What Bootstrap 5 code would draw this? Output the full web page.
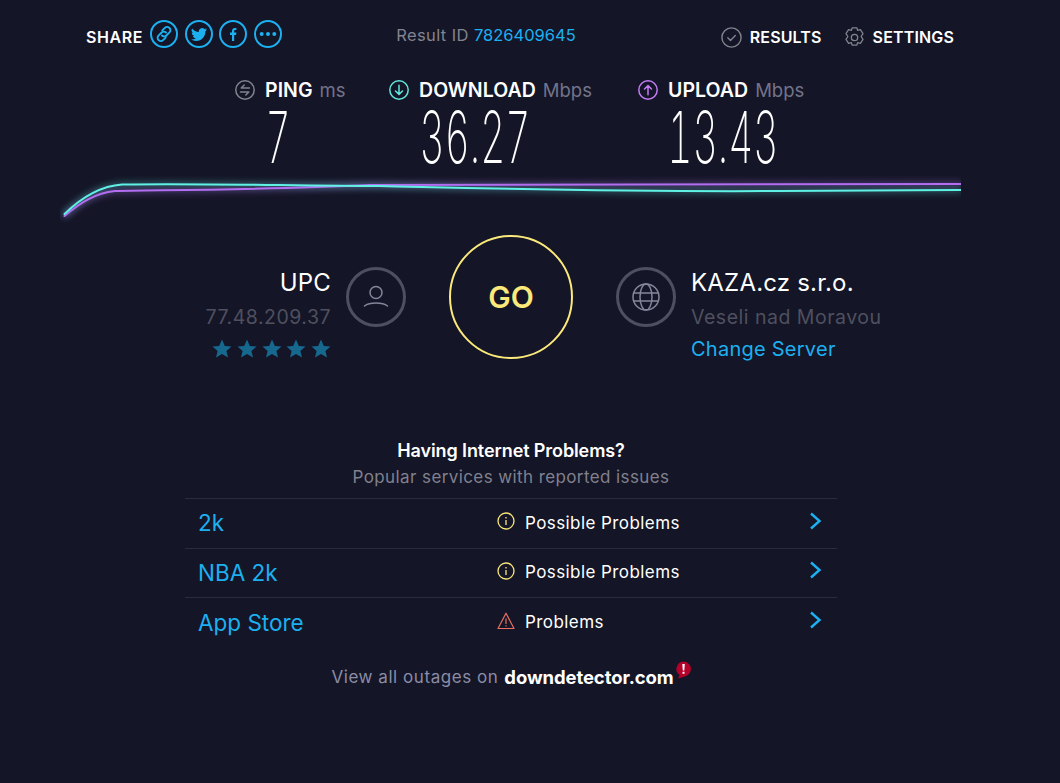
<!DOCTYPE html>
<html lang="en">
<head>
  <meta charset="UTF-8">
  <title>Speedtest</title>
  <link href="https://cdn.jsdelivr.net/npm/bootstrap@5.3.0/dist/css/bootstrap.min.css" rel="stylesheet">
  <style>
    body { background: #141526; color: #fff; font-family: Inter, "Liberation Sans", sans-serif; height: 783px; overflow: hidden; }
    svg { display: block; flex: none; }
    .top-bar { padding: 20px 106px 0 86px; height: 80px; }
    .top-label { font-size: 16px; font-weight: 600; letter-spacing: .15px; }
    .top-right { margin-top: 5px; }
    .share-label { margin-top: 5px; letter-spacing: .6px; }
    .share-icons { gap: 6.7px; margin-left: 7px; }
    .result-id { margin-left: 114px; font-size: 16.5px; color: #82838f; line-height: 30px; letter-spacing: .4px; }
    .cyan-link { color: #1cb0f0; text-decoration: none; }
    .result-id .cyan-link { letter-spacing: 0; }
    .metrics { padding-left: 235px; height: 90px; }
    .metric-head { font-size: 19.5px; font-weight: 600; letter-spacing: .05px; line-height: 20px; height: 20px; white-space: nowrap; gap: 10px; }
    .metric-head span { color: #72738a; font-weight: 400; letter-spacing: 0; font-size: 18.5px; margin-left: 2px; }
    .metric-value { font-weight: 200; font-size: 72px; line-height: 62px; margin-top: 6px; color: #fff; transform: scaleX(.54); justify-content: center; display: flex; font-variant-numeric: tabular-nums; }
    .metric-ping { width: 109px; margin-right: 45px; }
    .metric-down { width: 203px; margin-right: 46px; }
    .metric-up { width: 165px; }
    .graph { margin-top: -5px; height: 60px; }
    .server-row { display: grid; grid-template-columns: 1fr auto 1fr; width: 1022px; margin-top: 10px; column-gap: 43px; align-items: center; height: 124px; }
    .round-icon { width: 60px; height: 60px; border: 3px solid #4e4f60; border-radius: 50%; }
    .go-btn { width: 124px; height: 124px; border: 2px solid #fbe97b; border-radius: 50%; color: #fbe97b; font-size: 30px; font-weight: 600; background: none; }
    .srv-gap { gap: 15px; }
    .srv-text { line-height: 32px; white-space: nowrap; margin-top: 19px; margin-bottom: -19px; }
    .srv-name { font-size: 24px; font-weight: 400; height: 34px; letter-spacing: .2px; }
    .srv-sub { font-size: 19.5px; color: #4f505f; height: 32px; letter-spacing: .5px; }
    .srv-link { font-size: 20px; line-height: 32px; letter-spacing: .25px; }
    .stars { height: 32px; }
    .problems { width: 652px; margin: 80px 0 0 185px; }
    .prob-title { font-size: 18px; font-weight: 600; line-height: 24px; letter-spacing: -.1px; }
    .prob-sub { font-size: 17px; color: #80818e; line-height: 24px; margin-top: 2px; letter-spacing: .4px; margin-bottom: 9px; }
    .prob-list { border-top: 1px solid #2a2b3b; }
    .prob-row { background: transparent; color: #fff; border-color: #2a2b3b; height: 49.6px; padding: 0 15px 0 13px; }
    .prob-name { width: 299px; font-size: 22.5px; color: #1cb0f0; }
    .prob-status { font-size: 17px; letter-spacing: .42px; font-weight: 400; }
    .prob-status svg { margin: -4px 10px 0 0; }
    .prob-arrow { margin-top: -5px; }
    .prob-foot { margin-top: 16px; font-size: 17px; color: #8b8ca6; letter-spacing: .55px; }
    .prob-foot strong { font-size: 18.5px; color: #fff; font-weight: 700; letter-spacing: -.1px; margin-left: 2px; }
    .dd-mark { margin: -16px 0 0 -3px; }
  </style>
</head>
<body>
  <div class="top-bar d-flex">
    <div class="d-flex align-items-start">
      <a class="top-label share-label text-white text-decoration-none">SHARE</a>
      <div class="share-icons d-flex">
        <svg width="28" height="28" viewBox="0 0 28 28" fill="none" stroke="#1cb0f0" stroke-width="2"><circle cx="14" cy="14" r="13"/><g stroke-width="1.9" stroke-linecap="round"><path d="M12.3 10.4l2.6-2.6a3.1 3.1 0 0 1 4.4 0l.2.2a3.1 3.1 0 0 1 0 4.4l-3.1 3.1a3.1 3.1 0 0 1-4.4 0"/><path d="M15.7 17.6l-2.6 2.6a3.1 3.1 0 0 1-4.4 0l-.2-.2a3.1 3.1 0 0 1 0-4.4l3.1-3.1a3.1 3.1 0 0 1 4.4 0"/></g></svg>
        <svg width="28" height="28" viewBox="0 0 28 28" fill="none" stroke="#1cb0f0" stroke-width="2"><circle cx="14" cy="14" r="13"/><svg x="6" y="6" width="16" height="16" viewBox="0 0 16 16"><path fill="#1cb0f0" stroke="none" d="M5.026 15c6.038 0 9.341-5.003 9.341-9.334 0-.14 0-.282-.006-.422A6.685 6.685 0 0 0 16 3.542a6.658 6.658 0 0 1-1.889.518 3.301 3.301 0 0 0 1.447-1.817 6.533 6.533 0 0 1-2.087.793A3.286 3.286 0 0 0 7.875 6.03a9.325 9.325 0 0 1-6.767-3.429 3.289 3.289 0 0 0 1.018 4.382A3.323 3.323 0 0 1 .64 6.575v.045a3.288 3.288 0 0 0 2.632 3.218 3.203 3.203 0 0 1-.865.115 3.23 3.23 0 0 1-.614-.057 3.283 3.283 0 0 0 3.067 2.277A6.588 6.588 0 0 1 .78 13.58a6.32 6.32 0 0 1-.78-.045A9.344 9.344 0 0 0 5.026 15z"/></svg></svg>
        <svg width="28" height="28" viewBox="0 0 28 28" fill="none" stroke="#1cb0f0" stroke-width="2"><circle cx="14" cy="14" r="13"/><path fill="#1cb0f0" stroke="none" d="M13 21v-6h-2v-2.4h2v-1.7c0-2 1.2-3 2.9-3 .8 0 1.3.1 1.5.1v2.1h-1.1c-.9 0-1.1.5-1.1 1.1v1.4h2.2l-.3 2.4h-1.9v6z"/></svg>
        <svg width="28" height="28" viewBox="0 0 28 28" fill="none" stroke="#1cb0f0" stroke-width="2"><circle cx="14" cy="14" r="13"/><g fill="#1cb0f0" stroke="none"><circle cx="7.7" cy="14" r="2"/><circle cx="14" cy="14" r="2"/><circle cx="20.3" cy="14" r="2"/></g></svg>
      </div>
    </div>
    <div class="result-id">Result ID <a class="cyan-link">7826409645</a></div>
    <div class="ms-auto d-flex align-items-center align-self-start gap-2 top-label top-right">
      <svg width="21" height="21" viewBox="0 0 21 21" fill="none" stroke="#82838f" stroke-width="1.4"><circle cx="10.5" cy="10.5" r="9.6"/><path d="M6.8 10.8l2.7 2.6 4.8-5" stroke-linecap="round" stroke-linejoin="round"/></svg>
      <span>RESULTS</span>
      <svg style="margin-left:14px" width="21" height="21" viewBox="0 0 21 21" fill="none" stroke="#82838f" stroke-width="1.3" stroke-linejoin="round"><path d="M8.1.8h4.800l.7 2.600 2.800-.8 2.600 4-1.900 2.900 1.900 2.900-2.600 4-2.800-.8-.7 2.600H8.100l-.7-2.600-2.800.8-2.600-4 1.900-2.900-1.900-2.900 2.600-4 2.800.8z"/><circle cx="10.500" cy="10.500" r="3.200"/></svg>
      <span>SETTINGS</span>
    </div>
  </div>

  <div class="metrics d-flex">
    <div class="metric-ping">
      <div class="metric-head d-flex align-items-center"><svg width="20" height="20" viewBox="0 0 20 20" fill="none" stroke="#82838f" stroke-width="1.5"><circle cx="10" cy="10" r="9.2"/><path d="M14.5 8H6.2l3-3M5.500 12h8.300l-3 3" stroke-linecap="round" stroke-linejoin="round"/></svg><div>PING <span>ms</span></div></div>
      <div class="metric-value" style="width:86px">7</div>
    </div>
    <div class="metric-down">
      <div class="metric-head d-flex align-items-center"><svg width="20" height="20" viewBox="0 0 20 20" fill="none" stroke="#5fe6da" stroke-width="1.5"><circle cx="10" cy="10" r="9.2"/><path d="M10 5.200v9M6.500 11l3.500 3.400L13.500 11" stroke-linecap="round" stroke-linejoin="round"/></svg><div>DOWNLOAD <span>Mbps</span></div></div>
      <div class="metric-value" style="width:172px">36.27</div>
    </div>
    <div class="metric-up">
      <div class="metric-head d-flex align-items-center"><svg width="20" height="20" viewBox="0 0 20 20" fill="none" stroke="#c17cf5" stroke-width="1.5"><circle cx="10" cy="10" r="9.2"/><path d="M10 14.800v-9M6.500 9L10 5.600 13.500 9" stroke-linecap="round" stroke-linejoin="round"/></svg><div>UPLOAD <span>Mbps</span></div></div>
      <div class="metric-value" style="width:170px">13.43</div>
    </div>
  </div>

  <div class="graph">
    <svg width="1060" height="60" viewBox="0 165 1060 60" fill="none">
      <defs>
        <filter id="glow" x="-5%" y="-200%" width="110%" height="500%"><feGaussianBlur stdDeviation="3.5"/></filter>
        <clipPath id="graphClip"><rect x="60" y="165" width="901" height="60"/></clipPath>
      </defs>
      <g clip-path="url(#graphClip)" stroke-linecap="round">
        <path d="M64.500 216C80 203 95 193 115 191C150 190 260 190 370 185C480 183 700 184 961 184" stroke="#b26df0" stroke-width="4" opacity=".45" filter="url(#glow)"/>
        <path d="M64.500 214C82 197 100 186 122 184.500C200 183 300 186 380 186C470 188 600 192 780 191C860 190 910 190 961 190" stroke="#5ff2e4" stroke-width="4" opacity=".4" filter="url(#glow)"/>
        <path d="M64.500 216C80 203 95 193 115 191C150 190 260 190 370 185C480 183 700 184 961 184" stroke="#b26df0" stroke-width="2"/>
        <path d="M64.500 214C82 197 100 186 122 184.500C200 183 300 186 380 186C470 188 600 192 780 191C860 190 910 190 961 190" stroke="#5ff2e4" stroke-width="2"/>
      </g>
    </svg>
  </div>

  <div class="server-row">
    <div class="d-flex justify-content-end align-items-center srv-gap">
      <div class="srv-text text-end">
        <div class="srv-name">UPC</div>
        <div class="srv-sub">77.48.209.37</div>
        <div class="stars d-flex justify-content-end align-items-center">
          <svg width="119" height="20" viewBox="0 0 119 20" fill="#17688f"><defs><path id="st" d="M10 .5l2.800 6.500 6.700.5-5.100 4.400 1.600 6.700L10 15l-6 3.600 1.600-6.700L.5 7.500 7.200 7z"/></defs><use href="#st"/><use href="#st" x="25"/><use href="#st" x="50"/><use href="#st" x="74"/><use href="#st" x="99"/></svg>
        </div>
      </div>
      <div class="round-icon d-flex align-items-center justify-content-center">
        <svg width="28" height="28" viewBox="0 0 28 28" fill="none" stroke="#85869a" stroke-width="1.500" stroke-linecap="round"><circle cx="14" cy="9.500" r="6"/><path d="M2.500 23c3-2.400 7-3 11.500-3s8.500.6 11.500 3"/></svg>
      </div>
    </div>
    <button class="go-btn d-flex align-items-center justify-content-center p-0">GO</button>
    <div class="d-flex align-items-center srv-gap">
      <div class="round-icon d-flex align-items-center justify-content-center">
        <svg width="28" height="28" viewBox="0 0 28 28" fill="none" stroke="#85869a" stroke-width="1.500"><circle cx="14" cy="14" r="13"/><ellipse cx="14" cy="14" rx="6" ry="13"/><path d="M1.500 10h25M1.500 18h25"/></svg>
      </div>
      <div class="srv-text">
        <div class="srv-name">KAZA.cz s.r.o.</div>
        <div class="srv-sub">Veseli nad Moravou</div>
        <a class="srv-link cyan-link">Change Server</a>
      </div>
    </div>
  </div>

  <div class="problems text-center">
    <div class="prob-title">Having Internet Problems?</div>
    <div class="prob-sub">Popular services with reported issues</div>
    <div class="prob-list list-group list-group-flush text-start">
      <div class="prob-row list-group-item d-flex align-items-center">
        <div class="prob-name">2k</div>
        <div class="prob-status d-flex align-items-center"><svg width="18" height="18" viewBox="0 0 18 18" fill="none" stroke="#fbe97b" stroke-width="1.300"><circle cx="9" cy="9" r="8"/><path d="M9 8v5M9 5v1.400"/></svg>Possible Problems</div>
        <svg class="prob-arrow ms-auto" width="13" height="18" viewBox="0 0 13 18" fill="none" stroke="#1cb0f0" stroke-width="2.400"><path d="M2 1.500L10.500 9 2 16.500"/></svg>
      </div>
      <div class="prob-row list-group-item d-flex align-items-center">
        <div class="prob-name">NBA 2k</div>
        <div class="prob-status d-flex align-items-center"><svg width="18" height="18" viewBox="0 0 18 18" fill="none" stroke="#fbe97b" stroke-width="1.300"><circle cx="9" cy="9" r="8"/><path d="M9 8v5M9 5v1.400"/></svg>Possible Problems</div>
        <svg class="prob-arrow ms-auto" width="13" height="18" viewBox="0 0 13 18" fill="none" stroke="#1cb0f0" stroke-width="2.400"><path d="M2 1.500L10.500 9 2 16.500"/></svg>
      </div>
      <div class="prob-row list-group-item d-flex align-items-center">
        <div class="prob-name">App Store</div>
        <div class="prob-status d-flex align-items-center"><svg width="18" height="18" viewBox="0 0 18 18" fill="none" stroke="#e8715f" stroke-width="1.200" stroke-linejoin="round"><path d="M9 1.200L17 16.500H1z"/><path d="M9 6.500v5.500M9 13.300v1.300"/></svg>Problems</div>
        <svg class="prob-arrow ms-auto" width="13" height="18" viewBox="0 0 13 18" fill="none" stroke="#1cb0f0" stroke-width="2.400"><path d="M2 1.500L10.500 9 2 16.500"/></svg>
      </div>
    </div>
    <div class="prob-foot d-flex justify-content-center align-items-center gap-1">
      <span>View all outages on</span> <strong>downdetector.com</strong>
      <svg class="dd-mark" width="16" height="18" viewBox="0 0 16 18"><path fill="#b5002a" d="M8.500.5a7.500 7.500 0 0 1 2 14.700L3 17.500l1.600-3.400A7.500 7.500 0 0 1 8.500.5z"/><path fill="#fff" d="M7.300 3h2.500L9.300 9.500H7.800zM7.500 10.700h2v2h-2z"/></svg>
    </div>
  </div>
</body>
</html>
